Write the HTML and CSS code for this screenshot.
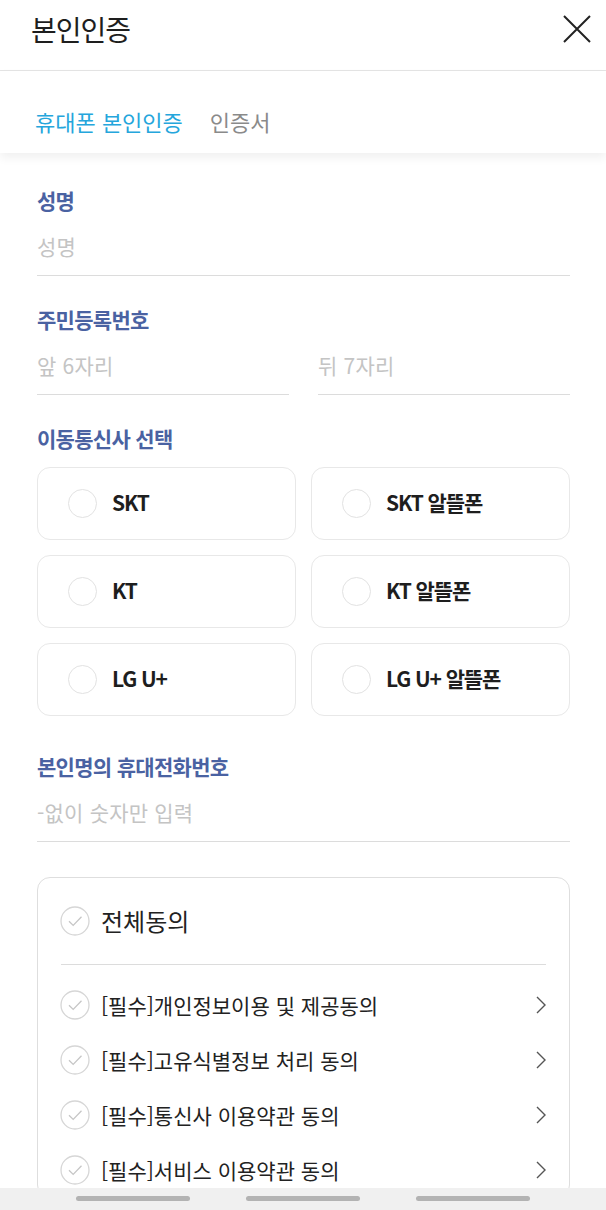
FILE: index.html
```html
<!DOCTYPE html>
<html lang="ko">
<head>
    <meta charset="UTF-8">
    <meta name="viewport" content="width=device-width, initial-scale=1.0">
    <title>본인인증</title>
    <link rel="stylesheet" href="styles.css">
</head>
<body>
    <div class="header">
        <h1>본인인증</h1>
        <a class="close-btn" href="#">
            <svg width="28" height="28" viewBox="0 0 28 28">
                <path d="M1 1 L27 27 M27 1 L1 27" stroke="#222" stroke-width="2" fill="none"/>
            </svg>
        </a>
    </div>

    <div class="tabs">
        <a class="tab active" href="#">휴대폰 본인인증</a>
        <a class="tab" href="#">인증서</a>
    </div>

    <div class="content">
        <!-- 성명 -->
        <div class="field">
            <label class="field-label">성명</label>
            <input class="field-input" type="text" placeholder="성명">
        </div>

        <!-- 주민등록번호 -->
        <div class="field">
            <label class="field-label">주민등록번호</label>
            <div class="field-row">
                <input class="field-input" type="text" placeholder="앞 6자리">
                <input class="field-input" type="password" placeholder="뒤 7자리">
            </div>
        </div>

        <!-- 통신사 -->
        <div class="field">
            <label class="field-label">이동통신사 선택</label>
            <div class="carrier-grid">
                <div class="carrier"><span class="radio"></span>SKT</div>
                <div class="carrier"><span class="radio"></span>SKT 알뜰폰</div>
                <div class="carrier"><span class="radio"></span>KT</div>
                <div class="carrier"><span class="radio"></span>KT 알뜰폰</div>
                <div class="carrier"><span class="radio"></span>LG U+</div>
                <div class="carrier"><span class="radio"></span>LG U+ 알뜰폰</div>
            </div>
        </div>

        <div class="field phone-field">
            <label class="field-label">본인명의 휴대전화번호</label>
            <input class="field-input" type="tel" placeholder="-없이 숫자만 입력">
        </div>

        <!-- 약관 동의 -->
        <div class="agree-box">
            <div class="agree-all">
                <svg class="check" width="30" height="30" viewBox="0 0 30 30">
                    <circle cx="15" cy="15" r="14" stroke="#d6d6d6" stroke-width="1.3" fill="none"/>
                    <path d="M9 15.2 L13.2 19.4 L21.5 10.8" stroke="#c6c6c6" stroke-width="1.3" fill="none"/>
                </svg>
                전체동의
            </div>
            <ul class="agree-list">
                <li>
                    <svg class="check" width="30" height="30" viewBox="0 0 30 30">
                        <circle cx="15" cy="15" r="14" stroke="#d6d6d6" stroke-width="1.3" fill="none"/>
                        <path d="M9 15.2 L13.2 19.4 L21.5 10.8" stroke="#c6c6c6" stroke-width="1.3" fill="none"/>
                    </svg>
                    <span class="agree-text">[필수]개인정보이용 및 제공동의</span>
                    <svg class="arrow" width="10" height="18" viewBox="0 0 10 18">
                        <path d="M1 1 L9 9 L1 17" stroke="#555" stroke-width="1.4" fill="none"/>
                    </svg>
                </li>
                <li>
                    <svg class="check" width="30" height="30" viewBox="0 0 30 30">
                        <circle cx="15" cy="15" r="14" stroke="#d6d6d6" stroke-width="1.3" fill="none"/>
                        <path d="M9 15.2 L13.2 19.4 L21.5 10.8" stroke="#c6c6c6" stroke-width="1.3" fill="none"/>
                    </svg>
                    <span class="agree-text">[필수]고유식별정보 처리 동의</span>
                    <svg class="arrow" width="10" height="18" viewBox="0 0 10 18">
                        <path d="M1 1 L9 9 L1 17" stroke="#555" stroke-width="1.4" fill="none"/>
                    </svg>
                </li>
                <li>
                    <svg class="check" width="30" height="30" viewBox="0 0 30 30">
                        <circle cx="15" cy="15" r="14" stroke="#d6d6d6" stroke-width="1.3" fill="none"/>
                        <path d="M9 15.2 L13.2 19.4 L21.5 10.8" stroke="#c6c6c6" stroke-width="1.3" fill="none"/>
                    </svg>
                    <span class="agree-text">[필수]통신사 이용약관 동의</span>
                    <svg class="arrow" width="10" height="18" viewBox="0 0 10 18">
                        <path d="M1 1 L9 9 L1 17" stroke="#555" stroke-width="1.4" fill="none"/>
                    </svg>
                </li>
                <li>
                    <svg class="check" width="30" height="30" viewBox="0 0 30 30">
                        <circle cx="15" cy="15" r="14" stroke="#d6d6d6" stroke-width="1.3" fill="none"/>
                        <path d="M9 15.2 L13.2 19.4 L21.5 10.8" stroke="#c6c6c6" stroke-width="1.3" fill="none"/>
                    </svg>
                    <span class="agree-text">[필수]서비스 이용약관 동의</span>
                    <svg class="arrow" width="10" height="18" viewBox="0 0 10 18">
                        <path d="M1 1 L9 9 L1 17" stroke="#555" stroke-width="1.4" fill="none"/>
                    </svg>
                </li>
            </ul>
        </div>
    </div>

    <div class="nav-bar">
        <span class="nav-pill"></span>
        <span class="nav-pill"></span>
        <span class="nav-pill"></span>
    </div>
</body>
</html>
```

FILE: styles.css
```css
/* Global Styles */
* {
    box-sizing: border-box;
}

body {
    font-family: 'Noto Sans CJK KR', 'Noto Sans', sans-serif;
    margin: 0;
    padding: 0;
    background-color: #fff;
    color: #222;
    height: 100vh;
    display: flex;
    flex-direction: column;
    overflow: hidden;
}

/* Header */
.header {
    height: 71px;
    flex-shrink: 0;
    display: flex;
    align-items: center;
    justify-content: space-between;
    padding: 0 15px 12px 31px;
    border-bottom: 1px solid #e4e4e4;
}

.header h1 {
    margin: 0;
    font-size: 28px;
    line-height: 34px;
    font-weight: 400;
    letter-spacing: -1px;
    color: #1e1e1e;
}

.close-btn {
    display: flex;
}

/* Tabs */
.tabs {
    flex-shrink: 0;
    display: flex;
    gap: 27px;
    padding: 35px 35px 17px;
    box-shadow: 0 5px 9px rgba(0, 0, 0, 0.06);
    position: relative;
    z-index: 1;
}

.tab {
    font-size: 22px;
    line-height: 30px;
    color: #8a8a8a;
    text-decoration: none;
}

.tab.active {
    color: #25a6dc;
}

/* Content */
.content {
    flex-grow: 1;
    overflow: hidden;
    padding: 37px 36px 0 37px;
}

.field {
    margin-bottom: 33px;
}

.field-label {
    display: block;
    font-size: 21px;
    line-height: 24px;
    margin: -2px 0 6px;
    font-weight: 700;
    letter-spacing: -0.7px;
    color: #4a62a2;
}

.field-input {
    display: block;
    width: 100%;
    height: 58px;
    padding: 14px 0 15px;
    border: none;
    border-bottom: 1px solid #dcdcdc;
    font-family: inherit;
    font-size: 21px;
    line-height: 28px;
    letter-spacing: 0.2px;
    color: #222;
    outline: none;
    background: transparent;
}

.field-input::placeholder {
    color: #c4c4c4;
}

.field-row {
    display: flex;
    gap: 29px;
}

/* Carrier */
.carrier-grid {
    margin-top: 17px;
    display: grid;
    grid-template-columns: 1fr 1fr;
    gap: 15px;
}

.carrier {
    height: 73px;
    border: 1px solid #e8e8e8;
    border-radius: 13px;
    display: flex;
    align-items: center;
    padding-left: 30px;
    padding-bottom: 3px;
    font-size: 21px;
    font-weight: 700;
    letter-spacing: -1.1px;
    color: #1e1e1e;
}

.radio {
    width: 29px;
    height: 29px;
    border: 1px solid #e2e2e2;
    border-radius: 50%;
    margin-right: 15px;
    margin-top: 3px;
    flex-shrink: 0;
}

.phone-field {
    margin-top: 40px;
    margin-bottom: 35px;
}

/* Agreement box */
.agree-box {
    border: 1px solid #dedede;
    border-radius: 13px;
    padding: 28px 23px 0 22px;
}

.agree-all {
    display: flex;
    align-items: center;
    gap: 11px;
    font-size: 24px;
    line-height: 30px;
    padding-bottom: 28px;
    border-bottom: 1px solid #dcdcdc;
    margin-left: 1px;
}

.agree-all .check {
    margin-left: -1px;
}

.agree-list {
    list-style: none;
    margin: 0;
    padding: 12px 0 0;
}

.agree-list li {
    height: 55px;
    display: flex;
    align-items: center;
    gap: 11px;
}

.agree-text {
    flex-grow: 1;
    font-size: 21px;
    color: #222;
}

.check {
    flex-shrink: 0;
}

/* Bottom nav */
.nav-bar {
    height: 22px;
    flex-shrink: 0;
    background-color: #f0f0f0;
    display: flex;
    justify-content: center;
    gap: 56px;
    padding-top: 8px;
}

.nav-pill {
    width: 114px;
    height: 5px;
    border-radius: 3px;
    background-color: #b3b3b3;
}
```
